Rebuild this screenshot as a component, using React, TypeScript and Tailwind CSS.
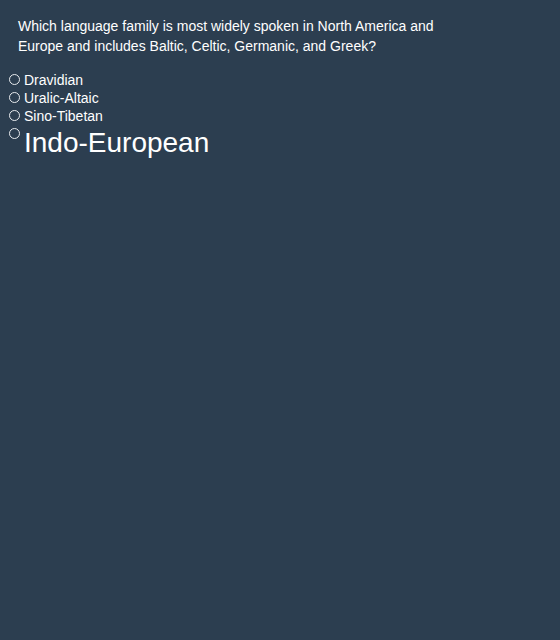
const options = [
  { label: "Dravidian", big: false },
  { label: "Uralic-Altaic", big: false },
  { label: "Sino-Tibetan", big: false },
  { label: "Indo-European", big: true },
]

const App = () => {
  return (
    <div className="min-h-screen bg-[#2c3e50] text-white font-['Liberation_Sans',Arial,sans-serif]">
      {/* Question */}
      <p className="pl-[18px] pr-[120px] pt-4 text-[14px] leading-[20px]">
        Which language family is most widely spoken in North America and Europe and includes Baltic,
        Celtic, Germanic, and Greek?
      </p>

      {/* Answers */}
      <div className="mt-[15px] pl-[9px] flex flex-col">
        {options.map((o) => (
          <label key={o.label} className="flex items-start gap-[4px]">
            <span className="mt-[3px] w-[11px] h-[11px] rounded-full border border-[#e8ebee] shrink-0"></span>
            <span className={o.big ? "text-[28px] leading-[36px]" : "text-[14px] leading-[18px]"}>
              {o.label}
            </span>
          </label>
        ))}
      </div>
    </div>
  )
}

export default App
